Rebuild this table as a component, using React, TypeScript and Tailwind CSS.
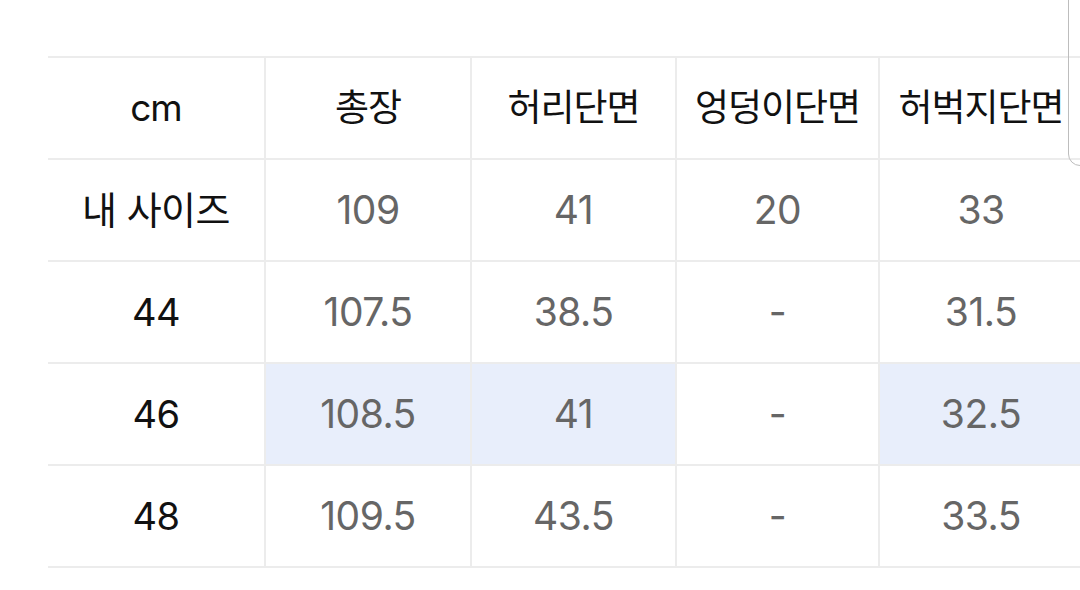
const headers = ["cm", "총장", "허리단면", "엉덩이단면", "허벅지단면"];

const rows: { label: string; values: string[]; hl?: number[] }[] = [
  { label: "내 사이즈", values: ["109", "41", "20", "33"] },
  { label: "44", values: ["107.5", "38.5", "-", "31.5"] },
  { label: "46", values: ["108.5", "41", "-", "32.5"], hl: [0, 1, 3] },
  { label: "48", values: ["109.5", "43.5", "-", "33.5"] },
];

const cell = "flex h-[102px] items-center justify-center border-b-2 border-[#ececec] whitespace-nowrap";

export default function App() {
  return (
    <div
      className="relative h-[590px] w-[1080px] overflow-hidden bg-white"
      style={{ fontFamily: "Inter, 'Noto Sans CJK KR', sans-serif" }}
    >
      <div className="pl-[48px] pt-[56px]">
        <div className="grid w-[1034px] grid-cols-[216px_206px_205px_203px_204px] border-t-2 border-[#ececec]">
          {headers.map((h, i) => (
            <div
              key={h}
              className={`${cell} ${i > 0 ? "border-l-2" : ""} text-[37px] tracking-[-1px] text-[#111]`}
            >
              {h}
            </div>
          ))}
          {rows.map((r) => (
            <div key={r.label} className="contents">
              <div className={`${cell} text-[38px] tracking-[-0.5px] text-[#111]`}>{r.label}</div>
              {r.values.map((v, j) => (
                <div
                  key={j}
                  className={`${cell} border-l-2 text-[39px] tracking-[-0.5px] text-[#666] ${
                    r.hl?.includes(j) ? "bg-[#e8eefb]" : ""
                  }`}
                >
                  {v}
                </div>
              ))}
            </div>
          ))}
        </div>
      </div>
      <div className="absolute left-[1068px] top-[-20px] h-[186px] w-[40px] rounded-[12px] border-[1.5px] border-[#bdbdbd]" />
    </div>
  );
}
